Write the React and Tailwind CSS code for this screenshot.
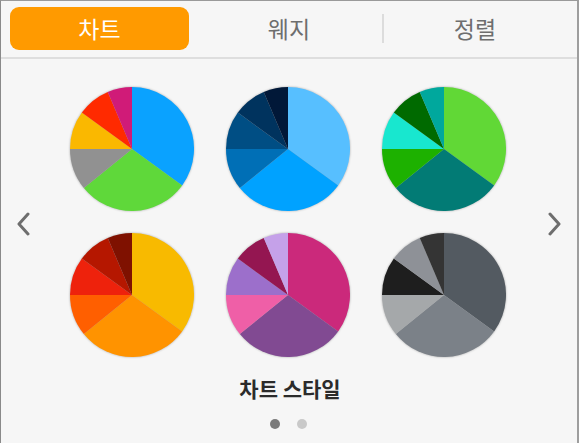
import React from "react";

const ANGLES = [0, 126, 231, 270, 306, 337, 360];

const PALETTES = [
  ["#0aa2ff", "#5fd83a", "#919191", "#fab800", "#ff2a00", "#d01b78"],
  ["#57bfff", "#00a2ff", "#006fb6", "#004e84", "#00335e", "#011838"],
  ["#61d836", "#027b75", "#1db100", "#18e7cf", "#006a00", "#00a89d"],
  ["#f8ba00", "#ff9300", "#ff5f00", "#ee220c", "#b51700", "#7f1100"],
  ["#cb297b", "#814a92", "#ef5fa7", "#9c6fcb", "#941651", "#c5a1e9"],
  ["#535a61", "#7b8188", "#a5a8aa", "#1e1e1e", "#8e9197", "#343434"],
];

function pt(a, r, c) {
  const rad = (a * Math.PI) / 180;
  return [c + r * Math.sin(rad), c - r * Math.cos(rad)];
}

function Pie({ colors }) {
  const r = 62;
  const c = 62;
  return (
    <svg width="124" height="124" viewBox="0 0 124 124" className="drop-shadow-[0_0_1px_rgba(0,0,0,0.3)]">
      {colors.map((col, i) => {
        const a0 = ANGLES[i];
        const a1 = ANGLES[i + 1];
        const [x0, y0] = pt(a0, r, c);
        const [x1, y1] = pt(a1, r, c);
        const large = a1 - a0 > 180 ? 1 : 0;
        const d = `M${c},${c} L${x0},${y0} A${r},${r} 0 ${large} 1 ${x1},${y1} Z`;
        return <path key={i} d={d} fill={col} />;
      })}
    </svg>
  );
}

function Chevron({ dir }) {
  return (
    <svg width="14" height="24" viewBox="0 0 14 24">
      <path
        d={dir === "left" ? "M12 2 L3 12 L12 22" : "M2 2 L11 12 L2 22"}
        fill="none"
        stroke="#6e6e6e"
        strokeWidth="3"
        strokeLinecap="round"
        strokeLinejoin="round"
      />
    </svg>
  );
}

export default function App() {
  return (
    <div
      className="w-[579px] h-[443px] bg-[#f6f6f6] border-l border-t border-r-2 border-l-[#8a8a8a] border-t-[#9a9a9a] border-r-[#9e9e9e] flex flex-col overflow-hidden"
      style={{ fontFamily: '"Noto Sans CJK KR", "Noto Sans", sans-serif' }}
    >
      <div className="h-[58px] shrink-0 border-b-2 border-[#dedede] flex items-start pt-[6px] px-[9px]">
        <div className="grid grid-cols-3 w-full h-[43px]">
          <div className="pr-[7px]">
            <div className="h-full rounded-[9px] bg-[#ff9a00] flex items-center justify-center text-white text-[23px] leading-none">
              차트
            </div>
          </div>
          <div className="flex items-center justify-center text-[#6e6e6e] text-[23px] leading-none">
            웨지
          </div>
          <div className="flex items-center justify-center text-[#6e6e6e] text-[23px] leading-none relative">
            <div className="absolute left-0 top-[7px] bottom-[7px] w-[2px] bg-[#dcdcdc]" />
            정렬
          </div>
        </div>
      </div>

      <div className="flex items-center pt-[28px]">
        <div className="w-[69px] flex justify-center pr-[26px] pt-[3px]">
          <Chevron dir="left" />
        </div>
        <div className="grid grid-cols-[124px_124px_124px] gap-x-[32px] gap-y-[22px]">
          {PALETTES.map((p, i) => (
            <Pie key={i} colors={p} />
          ))}
        </div>
        <div className="flex-1 flex justify-center pl-[26px] pt-[3px]">
          <Chevron dir="right" />
        </div>
      </div>

      <div className="flex flex-col items-center pt-[21px]">
        <div className="text-[21px] font-bold text-[#2b2b2b] leading-none pl-[2px]">
          차트 스타일
        </div>
        <div className="flex gap-[17px] mt-[20px] pr-[1px]">
          <div className="w-[10px] h-[10px] rounded-full bg-[#7b7b7b]" />
          <div className="w-[10px] h-[10px] rounded-full bg-[#c9c9c9]" />
        </div>
      </div>
    </div>
  );
}
